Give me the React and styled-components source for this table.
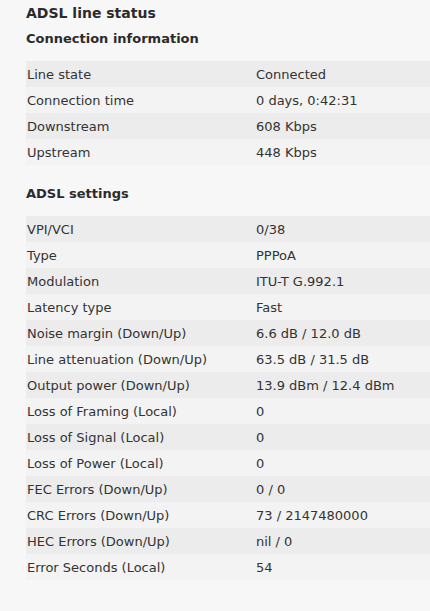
import React from 'react';
import styled, { createGlobalStyle } from 'styled-components';

const Global = createGlobalStyle`
  html, body {
    margin: 0;
    padding: 0;
    background: #f7f7f7;
  }
  body {
    font-family: "DejaVu Sans", Verdana, sans-serif;
    color: #333;
  }
`;

const Page = styled.div`
  padding: 3px 0 0 26px;
  width: 404px;
  overflow: hidden;
`;

const Title = styled.h1`
  margin: 0;
  font-size: 14px;
  font-weight: bold;
  line-height: 20px;
  color: #2b2b2b;
`;

const Section = styled.h2`
  margin: 8px 0 14px;
  font-size: 13px;
  font-weight: bold;
  line-height: 16px;
  color: #2b2b2b;
`;

const Table = styled.div`
  display: flex;
  flex-direction: column;
  margin-bottom: 21px;
`;

const Row = styled.div`
  display: grid;
  grid-template-columns: 229px 1fr;
  height: 26px;
  align-items: center;
  background: ${p => (p.$odd ? '#ececec' : '#f3f3f3')};
  font-size: 13px;
`;

const Cell = styled.span`
  padding-left: 1px;
  white-space: nowrap;
`;

const connection = [
  ['Line state', 'Connected'],
  ['Connection time', '0 days, 0:42:31'],
  ['Downstream', '608 Kbps'],
  ['Upstream', '448 Kbps'],
];

const settings = [
  ['VPI/VCI', '0/38'],
  ['Type', 'PPPoA'],
  ['Modulation', 'ITU-T G.992.1'],
  ['Latency type', 'Fast'],
  ['Noise margin (Down/Up)', '6.6 dB / 12.0 dB'],
  ['Line attenuation (Down/Up)', '63.5 dB / 31.5 dB'],
  ['Output power (Down/Up)', '13.9 dBm / 12.4 dBm'],
  ['Loss of Framing (Local)', '0'],
  ['Loss of Signal (Local)', '0'],
  ['Loss of Power (Local)', '0'],
  ['FEC Errors (Down/Up)', '0 / 0'],
  ['CRC Errors (Down/Up)', '73 / 2147480000'],
  ['HEC Errors (Down/Up)', 'nil / 0'],
  ['Error Seconds (Local)', '54'],
];

const StatusTable = ({ rows }) => (
  <Table>
    {rows.map(([label, value], i) => (
      <Row key={label} $odd={i % 2 === 0}>
        <Cell>{label}</Cell>
        <Cell>{value}</Cell>
      </Row>
    ))}
  </Table>
);

const App = () => (
  <>
    <Global />
    <Page>
      <Title>ADSL line status</Title>
      <Section>Connection information</Section>
      <StatusTable rows={connection} />
      <Section>ADSL settings</Section>
      <StatusTable rows={settings} />
    </Page>
  </>
);

export default App;
